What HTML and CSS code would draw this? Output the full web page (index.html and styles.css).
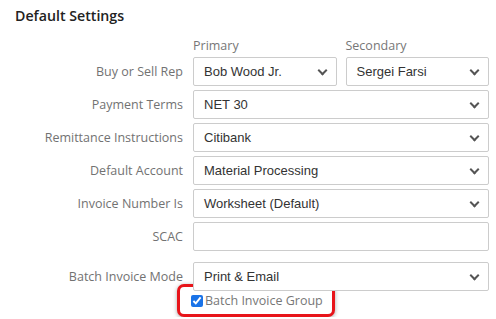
FILE: index.html
```html
<!DOCTYPE html>
<html lang="en">

<head>
    <meta charset="UTF-8">
    <title>Default Settings</title>
    <link rel="stylesheet" href="styles.css">
</head>

<body>
    <div class="settings">
        <h2>Default Settings</h2>
        <div class="form-grid">
            <div></div>
            <div class="pair heads">
                <span>Primary</span>
                <span>Secondary</span>
            </div>

            <label>Buy or Sell Rep</label>
            <div class="pair">
                <div class="select"><span>Bob Wood Jr.</span></div>
                <div class="select"><span>Sergei Farsi</span></div>
            </div>

            <label>Payment Terms</label>
            <div class="select"><span>NET 30</span></div>

            <label>Remittance Instructions</label>
            <div class="select"><span>Citibank</span></div>

            <label>Default Account</label>
            <div class="select"><span>Material Processing</span></div>

            <label>Invoice Number Is</label>
            <div class="select"><span>Worksheet (Default)</span></div>

            <label>SCAC</label>
            <div class="text-input"></div>

            <label class="spaced">Batch Invoice Mode</label>
            <div class="select spaced"><span>Print &amp; Email</span></div>

            <div></div>
            <div class="check-row">
                <div class="highlight">
                    <input type="checkbox" id="batchGroup" checked>
                    <label for="batchGroup">Batch Invoice Group</label>
                </div>
            </div>
        </div>
    </div>
</body>

</html>
```

FILE: styles.css
```css
body {
    margin: 0;
    background: #fff;
    font-family: "Open Sans", sans-serif;
}

.settings {
    padding: 5px 7px 0 15px;
}

h2 {
    margin: 0 0 12px 0;
    font-size: 14.2px;
    font-weight: 600;
    line-height: 22px;
    color: #222;
}

.form-grid {
    display: grid;
    grid-template-columns: 168px 1fr;
    column-gap: 10px;
    row-gap: 4px;
    align-items: center;
}

.form-grid > label {
    text-align: right;
    font-size: 12.5px;
    color: #727272;
    white-space: nowrap;
}

.pair {
    display: grid;
    grid-template-columns: 1fr 1fr;
    column-gap: 9px;
}

.heads span {
    font-size: 12.5px;
    color: #777;
    line-height: 14px;
}

.select,
.text-input {
    position: relative;
    height: 27px;
    border: 1px solid #ccc;
    border-radius: 2px;
    background: #fff;
    box-sizing: content-box;
}

.select span {
    display: block;
    padding-left: 10px;
    line-height: 27px;
    font-family: "Liberation Sans", Arial, sans-serif;
    font-size: 13px;
    color: #333;
}

.select::after {
    content: "";
    position: absolute;
    right: 10px;
    top: 9px;
    width: 5px;
    height: 5px;
    border-right: 2px solid #555;
    border-bottom: 2px solid #555;
    transform: rotate(45deg);
}

.spaced {
    margin-top: 7px;
}

.check-row {
    margin-top: -11px;
    margin-left: -16px;
}

.highlight {
    display: inline-flex;
    align-items: center;
    gap: 2px;
    height: 27px;
    padding: 0 9px 0 11px;
    border: 3px solid #e8141a;
    border-radius: 7px;
    box-shadow: 0 1px 4px rgba(0, 0, 0, 0.35);
    background: #fff;
}

.highlight input {
    margin: 0;
    width: 12px;
    height: 12px;
    accent-color: #1a73e8;
}

.highlight label {
    font-size: 12.5px;
    color: #777;
}
```
